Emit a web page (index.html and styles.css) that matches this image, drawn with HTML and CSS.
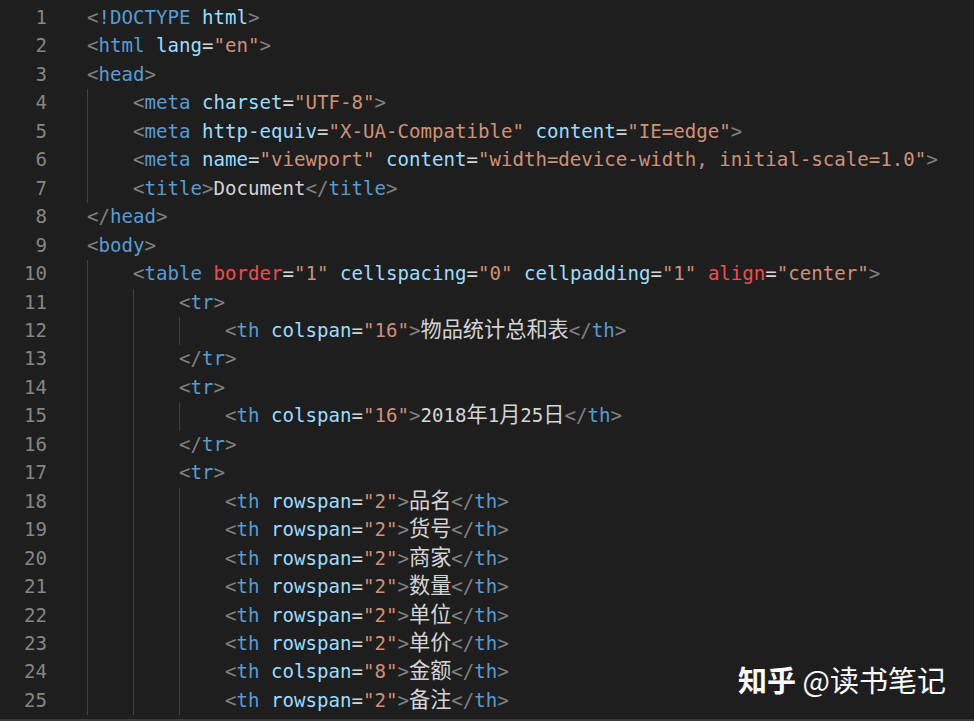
FILE: index.html
```html
<!DOCTYPE html>
<html lang="zh">
<head>
<meta charset="UTF-8">
<title>Editor</title>
<link rel="stylesheet" href="styles.css">
</head>
<body>
<div class="editor">
  <div class="line"><span class="ln">1</span><span class="code"><span class="p">&lt;</span><span class="t">!DOCTYPE</span> <span class="a">html</span><span class="p">&gt;</span></span></div>
  <div class="line"><span class="ln">2</span><span class="code"><span class="p">&lt;</span><span class="t">html</span> <span class="a">lang</span><span class="e">=</span><span class="s">"en"</span><span class="p">&gt;</span></span></div>
  <div class="line"><span class="ln">3</span><span class="code"><span class="p">&lt;</span><span class="t">head</span><span class="p">&gt;</span></span></div>
  <div class="line"><span class="ln">4</span><span class="code"><span class="ind"></span><span class="p">&lt;</span><span class="t">meta</span> <span class="a">charset</span><span class="e">=</span><span class="s">"UTF-8"</span><span class="p">&gt;</span></span></div>
  <div class="line"><span class="ln">5</span><span class="code"><span class="ind"></span><span class="p">&lt;</span><span class="t">meta</span> <span class="a">http-equiv</span><span class="e">=</span><span class="s">"X-UA-Compatible"</span> <span class="a">content</span><span class="e">=</span><span class="s">"IE=edge"</span><span class="p">&gt;</span></span></div>
  <div class="line"><span class="ln">6</span><span class="code"><span class="ind"></span><span class="p">&lt;</span><span class="t">meta</span> <span class="a">name</span><span class="e">=</span><span class="s">"viewport"</span> <span class="a">content</span><span class="e">=</span><span class="s">"width=device-width, initial-scale=1.0"</span><span class="p">&gt;</span></span></div>
  <div class="line"><span class="ln">7</span><span class="code"><span class="ind"></span><span class="p">&lt;</span><span class="t">title</span><span class="p">&gt;</span><span class="x">Document</span><span class="p">&lt;/</span><span class="t">title</span><span class="p">&gt;</span></span></div>
  <div class="line"><span class="ln">8</span><span class="code"><span class="p">&lt;/</span><span class="t">head</span><span class="p">&gt;</span></span></div>
  <div class="line"><span class="ln">9</span><span class="code"><span class="p">&lt;</span><span class="t">body</span><span class="p">&gt;</span></span></div>
  <div class="line"><span class="ln">10</span><span class="code"><span class="ind"></span><span class="p">&lt;</span><span class="t">table</span> <span class="r">border</span><span class="e">=</span><span class="s">"1"</span> <span class="a">cellspacing</span><span class="e">=</span><span class="s">"0"</span> <span class="a">cellpadding</span><span class="e">=</span><span class="s">"1"</span> <span class="r">align</span><span class="e">=</span><span class="s">"center"</span><span class="p">&gt;</span></span></div>
  <div class="line"><span class="ln">11</span><span class="code"><span class="ind"></span><span class="ind"></span><span class="p">&lt;</span><span class="t">tr</span><span class="p">&gt;</span></span></div>
  <div class="line"><span class="ln">12</span><span class="code"><span class="ind"></span><span class="ind"></span><span class="ind"></span><span class="p">&lt;</span><span class="t">th</span> <span class="a">colspan</span><span class="e">=</span><span class="s">"16"</span><span class="p">&gt;</span><span class="x cj">物品统计总和表</span><span class="p">&lt;/</span><span class="t">th</span><span class="p">&gt;</span></span></div>
  <div class="line"><span class="ln">13</span><span class="code"><span class="ind"></span><span class="ind"></span><span class="p">&lt;/</span><span class="t">tr</span><span class="p">&gt;</span></span></div>
  <div class="line"><span class="ln">14</span><span class="code"><span class="ind"></span><span class="ind"></span><span class="p">&lt;</span><span class="t">tr</span><span class="p">&gt;</span></span></div>
  <div class="line"><span class="ln">15</span><span class="code"><span class="ind"></span><span class="ind"></span><span class="ind"></span><span class="p">&lt;</span><span class="t">th</span> <span class="a">colspan</span><span class="e">=</span><span class="s">"16"</span><span class="p">&gt;</span><span class="x">2018<span class="cj">年</span>1<span class="cj">月</span>25<span class="cj">日</span></span><span class="p">&lt;/</span><span class="t">th</span><span class="p">&gt;</span></span></div>
  <div class="line"><span class="ln">16</span><span class="code"><span class="ind"></span><span class="ind"></span><span class="p">&lt;/</span><span class="t">tr</span><span class="p">&gt;</span></span></div>
  <div class="line"><span class="ln">17</span><span class="code"><span class="ind"></span><span class="ind"></span><span class="p">&lt;</span><span class="t">tr</span><span class="p">&gt;</span></span></div>
  <div class="line"><span class="ln">18</span><span class="code"><span class="ind"></span><span class="ind"></span><span class="ind"></span><span class="p">&lt;</span><span class="t">th</span> <span class="a">rowspan</span><span class="e">=</span><span class="s">"2"</span><span class="p">&gt;</span><span class="x cj">品名</span><span class="p">&lt;/</span><span class="t">th</span><span class="p">&gt;</span></span></div>
  <div class="line"><span class="ln">19</span><span class="code"><span class="ind"></span><span class="ind"></span><span class="ind"></span><span class="p">&lt;</span><span class="t">th</span> <span class="a">rowspan</span><span class="e">=</span><span class="s">"2"</span><span class="p">&gt;</span><span class="x cj">货号</span><span class="p">&lt;/</span><span class="t">th</span><span class="p">&gt;</span></span></div>
  <div class="line"><span class="ln">20</span><span class="code"><span class="ind"></span><span class="ind"></span><span class="ind"></span><span class="p">&lt;</span><span class="t">th</span> <span class="a">rowspan</span><span class="e">=</span><span class="s">"2"</span><span class="p">&gt;</span><span class="x cj">商家</span><span class="p">&lt;/</span><span class="t">th</span><span class="p">&gt;</span></span></div>
  <div class="line"><span class="ln">21</span><span class="code"><span class="ind"></span><span class="ind"></span><span class="ind"></span><span class="p">&lt;</span><span class="t">th</span> <span class="a">rowspan</span><span class="e">=</span><span class="s">"2"</span><span class="p">&gt;</span><span class="x cj">数量</span><span class="p">&lt;/</span><span class="t">th</span><span class="p">&gt;</span></span></div>
  <div class="line"><span class="ln">22</span><span class="code"><span class="ind"></span><span class="ind"></span><span class="ind"></span><span class="p">&lt;</span><span class="t">th</span> <span class="a">rowspan</span><span class="e">=</span><span class="s">"2"</span><span class="p">&gt;</span><span class="x cj">单位</span><span class="p">&lt;/</span><span class="t">th</span><span class="p">&gt;</span></span></div>
  <div class="line"><span class="ln">23</span><span class="code"><span class="ind"></span><span class="ind"></span><span class="ind"></span><span class="p">&lt;</span><span class="t">th</span> <span class="a">rowspan</span><span class="e">=</span><span class="s">"2"</span><span class="p">&gt;</span><span class="x cj">单价</span><span class="p">&lt;/</span><span class="t">th</span><span class="p">&gt;</span></span></div>
  <div class="line"><span class="ln">24</span><span class="code"><span class="ind"></span><span class="ind"></span><span class="ind"></span><span class="p">&lt;</span><span class="t">th</span> <span class="a">colspan</span><span class="e">=</span><span class="s">"8"</span><span class="p">&gt;</span><span class="x cj">金额</span><span class="p">&lt;/</span><span class="t">th</span><span class="p">&gt;</span></span></div>
  <div class="line"><span class="ln">25</span><span class="code"><span class="ind"></span><span class="ind"></span><span class="ind"></span><span class="p">&lt;</span><span class="t">th</span> <span class="a">rowspan</span><span class="e">=</span><span class="s">"2"</span><span class="p">&gt;</span><span class="x cj">备注</span><span class="p">&lt;/</span><span class="t">th</span><span class="p">&gt;</span></span></div>
  <div class="watermark"><span class="wm-brand">知乎</span> @读书笔记</div>
</div>
</body>
</html>
```

FILE: styles.css
```css
html, body {
  margin: 0;
  padding: 0;
  background: #1e1e1e;
}

.editor {
  position: relative;
  width: 974px;
  height: 721px;
  box-sizing: border-box;
  padding-top: 4px;
  background: #1e1e1e;
  border-bottom: 2px solid #3a3a3a;
  overflow: hidden;
  font-family: "DejaVu Sans Mono", "Liberation Mono", "Noto Sans CJK SC", monospace;
  font-size: 19.1px;
  color: #d4d4d4;
}

.line {
  display: flex;
  height: 28.46px;
  line-height: 28.46px;
  white-space: pre;
}

.ln {
  width: 47px;
  flex: none;
  text-align: right;
  color: #858585;
}

.code {
  display: block;
  margin-left: 40px;
  white-space: pre;
}

.ind {
  display: inline-block;
  vertical-align: top;
  width: 46px;
  height: 28.46px;
  box-sizing: border-box;
  border-left: 1px solid #404040;
}

.p { color: #808080; }
.t { color: #569cd6; }
.a { color: #9cdcfe; }
.s { color: #ce9178; }
.e { color: #d4d4d4; }
.r { color: #f14c4c; }
.x { color: #d4d4d4; }

.cj {
  font-family: "Noto Sans CJK SC", sans-serif;
  font-size: 21.2px;
  line-height: 20px;
}

.watermark {
  position: absolute;
  left: 738px;
  top: 659px;
  font-family: "Noto Sans CJK SC", sans-serif;
  font-size: 29px;
  line-height: 40px;
  color: #ffffff;
  white-space: pre;
}

.wm-brand {
  font-weight: 700;
}
```
